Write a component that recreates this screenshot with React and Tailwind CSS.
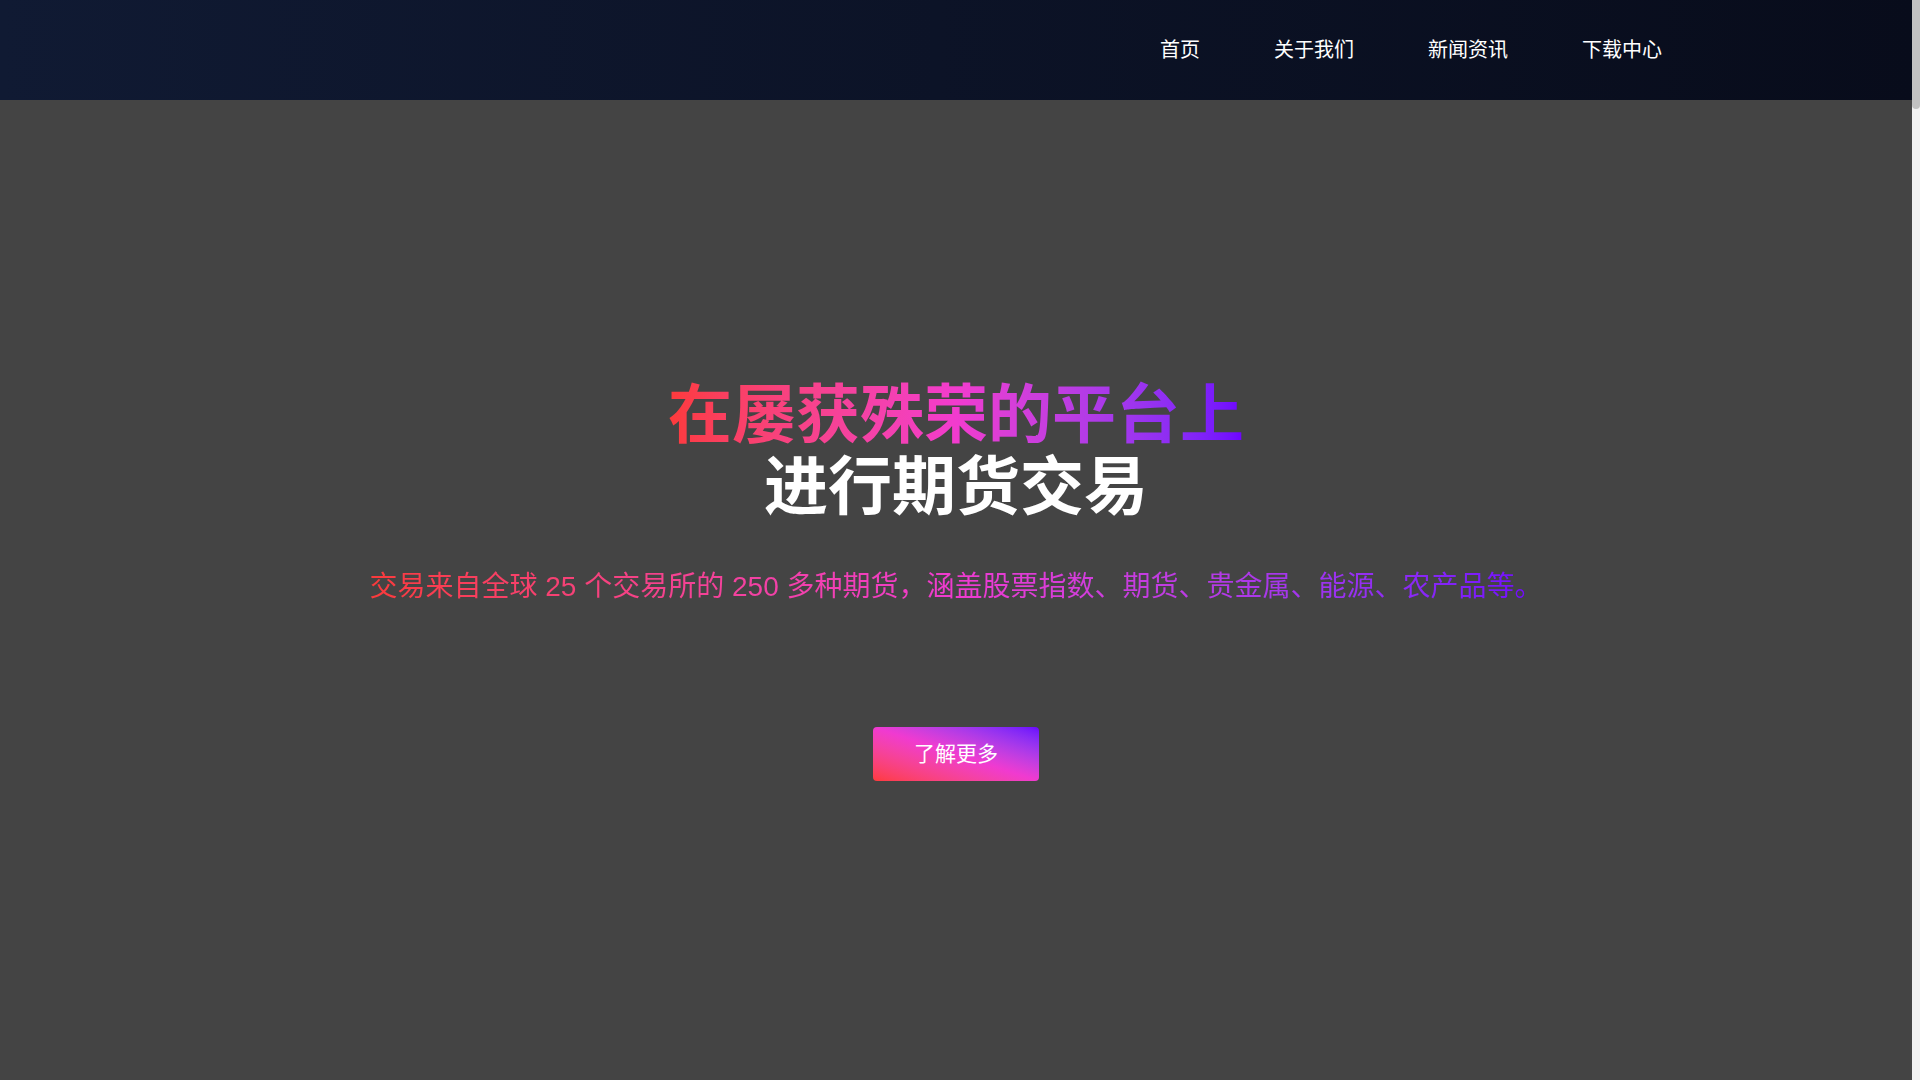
import React from "react";

const NAV = ["首页", "关于我们", "新闻资讯", "下载中心"];

export default function App() {
  return (
    <div
      className="h-screen flex bg-[#444444]"
      style={{ fontFamily: '"Liberation Sans", "Noto Sans CJK SC", sans-serif' }}
    >
      <div className="flex-1 min-w-0 overflow-hidden">
        <header className="h-[100px] bg-gradient-to-r from-[#101a33] to-[#080c1b] flex items-center justify-end pr-[250px]">
          <nav className="flex items-center gap-[74px]">
            {NAV.map((item) => (
              <a key={item} href="#" className="text-white text-[20px] leading-none">
                {item}
              </a>
            ))}
          </nav>
        </header>

        <section className="flex flex-col items-center pt-[279px]">
          <h1 className="text-[64px] leading-[72px] font-bold text-center">
            <span className="block bg-gradient-to-r from-[#fd3a3a] via-[#f23bce] to-[#6e00ff] bg-clip-text text-transparent">
              在屡获殊荣的平台上
            </span>
            <span className="block text-white">进行期货交易</span>
          </h1>
          <p className="mt-[44px] text-[28px] leading-[40px] bg-gradient-to-r from-[#fb3a3a] via-[#f03ad0] to-[#7000ff] bg-clip-text text-transparent">
            交易来自全球 25 个交易所的 250 多种期货，涵盖股票指数、期货、贵金属、能源、农产品等。
          </p>
          <a
            href="#"
            className="mt-[120px] w-[166px] h-[54px] rounded flex items-center justify-center text-white text-[21px] bg-gradient-to-tr from-[#ff3a3a] via-[#f03ad0] to-[#6a00ff]"
          >
            了解更多
          </a>
        </section>
      </div>

      {/* scrollbar strip */}
      <div className="w-2 shrink-0 bg-[#f1f1f1]">
        <div className="h-[109px] rounded-b bg-[#c1c1c1]" />
      </div>
    </div>
  );
}
